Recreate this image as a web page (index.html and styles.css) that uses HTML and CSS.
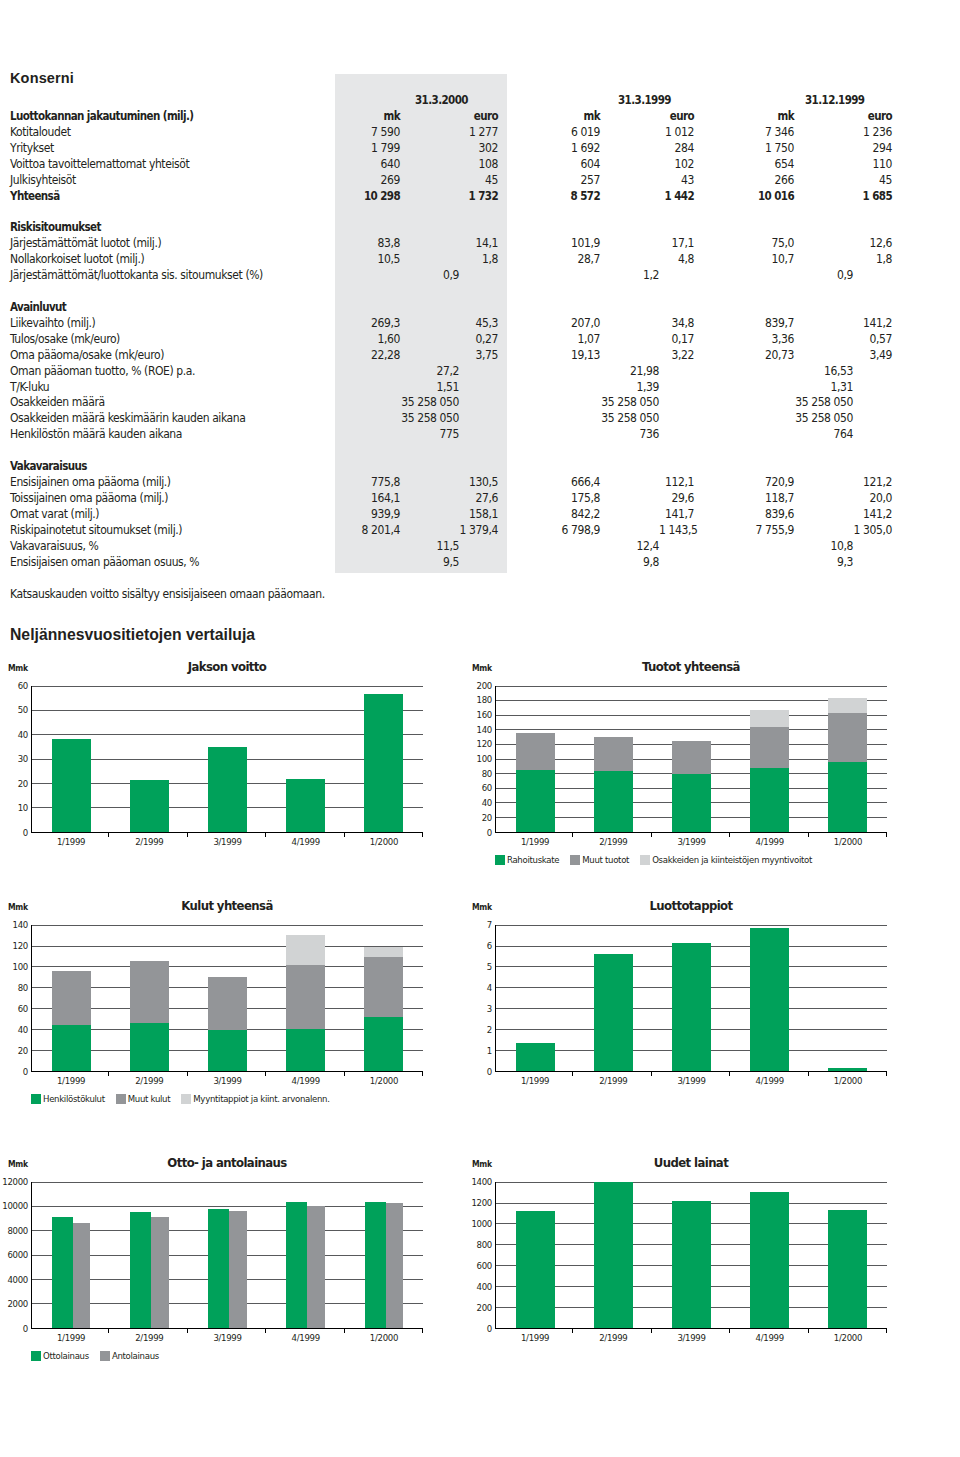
FILE: index.html
```html
<!DOCTYPE html>
<html lang="fi">
<head>
<meta charset="utf-8">
<title>Konserni</title>
<link rel="stylesheet" href="styles.css">
</head>
<body>
<div class="page">
  <section class="konserni">
    <h1 class="h-main">Konserni</h1>
    <div class="row"><span class="date d1">31.3.2000</span><span class="date d2">31.3.1999</span><span class="date d3">31.12.1999</span></div>
    <div class="row b"><span class="lbl">Luottokannan jakautuminen (milj.)</span><span class="v a1">mk</span><span class="v e1">euro</span><span class="v a2">mk</span><span class="v e2">euro</span><span class="v a3">mk</span><span class="v e3">euro</span></div>
    <div class="row"><span class="lbl">Kotitaloudet</span><span class="v a1">7 590</span><span class="v e1">1 277</span><span class="v a2">6 019</span><span class="v e2">1 012</span><span class="v a3">7 346</span><span class="v e3">1 236</span></div>
    <div class="row"><span class="lbl">Yritykset</span><span class="v a1">1 799</span><span class="v e1">302</span><span class="v a2">1 692</span><span class="v e2">284</span><span class="v a3">1 750</span><span class="v e3">294</span></div>
    <div class="row"><span class="lbl">Voittoa tavoittelemattomat yhteisöt</span><span class="v a1">640</span><span class="v e1">108</span><span class="v a2">604</span><span class="v e2">102</span><span class="v a3">654</span><span class="v e3">110</span></div>
    <div class="row"><span class="lbl">Julkisyhteisöt</span><span class="v a1">269</span><span class="v e1">45</span><span class="v a2">257</span><span class="v e2">43</span><span class="v a3">266</span><span class="v e3">45</span></div>
    <div class="row b"><span class="lbl">Yhteensä</span><span class="v a1">10 298</span><span class="v e1">1 732</span><span class="v a2">8 572</span><span class="v e2">1 442</span><span class="v a3">10 016</span><span class="v e3">1 685</span></div>
    <div class="row blank"></div>
    <div class="row b"><span class="lbl">Riskisitoumukset</span></div>
    <div class="row"><span class="lbl">Järjestämättömät luotot (milj.)</span><span class="v a1">83,8</span><span class="v e1">14,1</span><span class="v a2">101,9</span><span class="v e2">17,1</span><span class="v a3">75,0</span><span class="v e3">12,6</span></div>
    <div class="row"><span class="lbl">Nollakorkoiset luotot (milj.)</span><span class="v a1">10,5</span><span class="v e1">1,8</span><span class="v a2">28,7</span><span class="v e2">4,8</span><span class="v a3">10,7</span><span class="v e3">1,8</span></div>
    <div class="row"><span class="lbl">Järjestämättömät/luottokanta sis. sitoumukset (%)</span><span class="v m1">0,9</span><span class="v m2">1,2</span><span class="v m3">0,9</span></div>
    <div class="row blank"></div>
    <div class="row b"><span class="lbl">Avainluvut</span></div>
    <div class="row"><span class="lbl">Liikevaihto (milj.)</span><span class="v a1">269,3</span><span class="v e1">45,3</span><span class="v a2">207,0</span><span class="v e2">34,8</span><span class="v a3">839,7</span><span class="v e3">141,2</span></div>
    <div class="row"><span class="lbl">Tulos/osake (mk/euro)</span><span class="v a1">1,60</span><span class="v e1">0,27</span><span class="v a2">1,07</span><span class="v e2">0,17</span><span class="v a3">3,36</span><span class="v e3">0,57</span></div>
    <div class="row"><span class="lbl">Oma pääoma/osake (mk/euro)</span><span class="v a1">22,28</span><span class="v e1">3,75</span><span class="v a2">19,13</span><span class="v e2">3,22</span><span class="v a3">20,73</span><span class="v e3">3,49</span></div>
    <div class="row"><span class="lbl">Oman pääoman tuotto, % (ROE) p.a.</span><span class="v m1">27,2</span><span class="v m2">21,98</span><span class="v m3">16,53</span></div>
    <div class="row"><span class="lbl">T/K-luku</span><span class="v m1">1,51</span><span class="v m2">1,39</span><span class="v m3">1,31</span></div>
    <div class="row"><span class="lbl">Osakkeiden määrä</span><span class="v m1">35 258 050</span><span class="v m2">35 258 050</span><span class="v m3">35 258 050</span></div>
    <div class="row"><span class="lbl">Osakkeiden määrä keskimäärin kauden aikana</span><span class="v m1">35 258 050</span><span class="v m2">35 258 050</span><span class="v m3">35 258 050</span></div>
    <div class="row"><span class="lbl">Henkilöstön määrä kauden aikana</span><span class="v m1">775</span><span class="v m2">736</span><span class="v m3">764</span></div>
    <div class="row blank"></div>
    <div class="row b"><span class="lbl">Vakavaraisuus</span></div>
    <div class="row"><span class="lbl">Ensisijainen oma pääoma (milj.)</span><span class="v a1">775,8</span><span class="v e1">130,5</span><span class="v a2">666,4</span><span class="v e2">112,1</span><span class="v a3">720,9</span><span class="v e3">121,2</span></div>
    <div class="row"><span class="lbl">Toissijainen oma pääoma (milj.)</span><span class="v a1">164,1</span><span class="v e1">27,6</span><span class="v a2">175,8</span><span class="v e2">29,6</span><span class="v a3">118,7</span><span class="v e3">20,0</span></div>
    <div class="row"><span class="lbl">Omat varat (milj.)</span><span class="v a1">939,9</span><span class="v e1">158,1</span><span class="v a2">842,2</span><span class="v e2">141,7</span><span class="v a3">839,6</span><span class="v e3">141,2</span></div>
    <div class="row"><span class="lbl">Riskipainotetut sitoumukset (milj.)</span><span class="v a1">8 201,4</span><span class="v e1">1 379,4</span><span class="v a2">6 798,9</span><span class="v e2">1 143,5</span><span class="v a3">7 755,9</span><span class="v e3">1 305,0</span></div>
    <div class="row"><span class="lbl">Vakavaraisuus, %</span><span class="v m1">11,5</span><span class="v m2">12,4</span><span class="v m3">10,8</span></div>
    <div class="row"><span class="lbl">Ensisijaisen oman pääoman osuus, %</span><span class="v m1">9,5</span><span class="v m2">9,8</span><span class="v m3">9,3</span></div>
  </section>

  <p class="note">Katsauskauden voitto sisältyy ensisijaiseen omaan pääomaan.</p>

  <h2 class="h-main h-sec">Neljännesvuositietojen vertailuja</h2>

  <div class="chart-row r1">
    <div class="chart">
      <div class="mmk">Mmk</div><div class="ctitle">Jakson voitto</div>
      <div class="yaxis"><span>60</span><span>50</span><span>40</span><span>30</span><span>20</span><span>10</span><span>0</span></div>
      <div class="plot">
        <div class="grid"><i></i><i></i><i></i><i></i><i></i><i></i></div>
        <div class="bars">
          <div class="cat"><div class="bar g" style="height:63.4%"></div></div>
          <div class="cat"><div class="bar g" style="height:35.7%"></div></div>
          <div class="cat"><div class="bar g" style="height:58%"></div></div>
          <div class="cat"><div class="bar g" style="height:36.2%"></div></div>
          <div class="cat"><div class="bar g" style="height:94%"></div></div>
        </div>
      </div>
      <div class="ticks"><i></i><i></i><i></i><i></i><i></i></div>
      <div class="xlabels"><span>1/1999</span><span>2/1999</span><span>3/1999</span><span>4/1999</span><span>1/2000</span></div>
    </div>
    <div class="chart">
      <div class="mmk">Mmk</div><div class="ctitle">Tuotot yhteensä</div>
      <div class="yaxis"><span>200</span><span>180</span><span>160</span><span>140</span><span>120</span><span>100</span><span>80</span><span>60</span><span>40</span><span>20</span><span>0</span></div>
      <div class="plot">
        <div class="grid"><i></i><i></i><i></i><i></i><i></i><i></i><i></i><i></i><i></i><i></i></div>
        <div class="bars">
          <div class="cat"><div class="stack"><div class="gr" style="height:25.3%"></div><div class="g" style="height:42%"></div></div></div>
          <div class="cat"><div class="stack"><div class="gr" style="height:23.4%"></div><div class="g" style="height:41.6%"></div></div></div>
          <div class="cat"><div class="stack"><div class="gr" style="height:22.1%"></div><div class="g" style="height:39.8%"></div></div></div>
          <div class="cat"><div class="stack"><div class="lt" style="height:11.6%"></div><div class="gr" style="height:27.7%"></div><div class="g" style="height:43.9%"></div></div></div>
          <div class="cat"><div class="stack"><div class="lt" style="height:10.3%"></div><div class="gr" style="height:33.9%"></div><div class="g" style="height:47.5%"></div></div></div>
        </div>
      </div>
      <div class="ticks"><i></i><i></i><i></i><i></i><i></i></div>
      <div class="xlabels"><span>1/1999</span><span>2/1999</span><span>3/1999</span><span>4/1999</span><span>1/2000</span></div>
      <div class="legend">
        <span class="key"><span class="sw g"></span>Rahoituskate</span>
        <span class="key"><span class="sw gr"></span>Muut tuotot</span>
        <span class="key"><span class="sw lt"></span>Osakkeiden ja kiinteistöjen myyntivoitot</span>
      </div>
    </div>
  </div>

  <div class="chart-row r2">
    <div class="chart">
      <div class="mmk">Mmk</div><div class="ctitle">Kulut yhteensä</div>
      <div class="yaxis"><span>140</span><span>120</span><span>100</span><span>80</span><span>60</span><span>40</span><span>20</span><span>0</span></div>
      <div class="plot">
        <div class="grid"><i></i><i></i><i></i><i></i><i></i><i></i><i></i></div>
        <div class="bars">
          <div class="cat"><div class="stack"><div class="gr" style="height:37%"></div><div class="g" style="height:31.3%"></div></div></div>
          <div class="cat"><div class="stack"><div class="gr" style="height:42.4%"></div><div class="g" style="height:32.9%"></div></div></div>
          <div class="cat"><div class="stack"><div class="gr" style="height:35.8%"></div><div class="g" style="height:28.1%"></div></div></div>
          <div class="cat"><div class="stack"><div class="lt" style="height:20.4%"></div><div class="gr" style="height:44.2%"></div><div class="g" style="height:28.4%"></div></div></div>
          <div class="cat"><div class="stack"><div class="lt" style="height:6.8%"></div><div class="gr" style="height:41.3%"></div><div class="g" style="height:36.7%"></div></div></div>
        </div>
      </div>
      <div class="ticks"><i></i><i></i><i></i><i></i><i></i></div>
      <div class="xlabels"><span>1/1999</span><span>2/1999</span><span>3/1999</span><span>4/1999</span><span>1/2000</span></div>
      <div class="legend">
        <span class="key"><span class="sw g"></span>Henkilöstökulut</span>
        <span class="key"><span class="sw gr"></span>Muut kulut</span>
        <span class="key"><span class="sw lt"></span>Myyntitappiot ja kiint. arvonalenn.</span>
      </div>
    </div>
    <div class="chart">
      <div class="mmk">Mmk</div><div class="ctitle">Luottotappiot</div>
      <div class="yaxis"><span>7</span><span>6</span><span>5</span><span>4</span><span>3</span><span>2</span><span>1</span><span>0</span></div>
      <div class="plot">
        <div class="grid"><i></i><i></i><i></i><i></i><i></i><i></i><i></i></div>
        <div class="bars">
          <div class="cat"><div class="bar g" style="height:18.8%"></div></div>
          <div class="cat"><div class="bar g" style="height:80%"></div></div>
          <div class="cat"><div class="bar g" style="height:87.6%"></div></div>
          <div class="cat"><div class="bar g" style="height:97.6%"></div></div>
          <div class="cat"><div class="bar g" style="height:1.6%"></div></div>
        </div>
      </div>
      <div class="ticks"><i></i><i></i><i></i><i></i><i></i></div>
      <div class="xlabels"><span>1/1999</span><span>2/1999</span><span>3/1999</span><span>4/1999</span><span>1/2000</span></div>
    </div>
  </div>

  <div class="chart-row r3">
    <div class="chart">
      <div class="mmk">Mmk</div><div class="ctitle">Otto- ja antolainaus</div>
      <div class="yaxis"><span>12000</span><span>10000</span><span>8000</span><span>6000</span><span>4000</span><span>2000</span><span>0</span></div>
      <div class="plot">
        <div class="grid"><i></i><i></i><i></i><i></i><i></i><i></i></div>
        <div class="bars">
          <div class="cat"><div class="bar g pg" style="height:76.1%"></div><div class="bar gr pr" style="height:72%"></div></div>
          <div class="cat"><div class="bar g pg" style="height:79.5%"></div><div class="bar gr pr" style="height:75.5%"></div></div>
          <div class="cat"><div class="bar g pg" style="height:81.6%"></div><div class="bar gr pr" style="height:80%"></div></div>
          <div class="cat"><div class="bar g pg" style="height:85.9%"></div><div class="bar gr pr" style="height:83.4%"></div></div>
          <div class="cat"><div class="bar g pg" style="height:86.2%"></div><div class="bar gr pr" style="height:85.7%"></div></div>
        </div>
      </div>
      <div class="ticks"><i></i><i></i><i></i><i></i><i></i></div>
      <div class="xlabels"><span>1/1999</span><span>2/1999</span><span>3/1999</span><span>4/1999</span><span>1/2000</span></div>
      <div class="legend">
        <span class="key"><span class="sw g"></span>Ottolainaus</span>
        <span class="key"><span class="sw gr"></span>Antolainaus</span>
      </div>
    </div>
    <div class="chart">
      <div class="mmk">Mmk</div><div class="ctitle">Uudet lainat</div>
      <div class="yaxis"><span>1400</span><span>1200</span><span>1000</span><span>800</span><span>600</span><span>400</span><span>200</span><span>0</span></div>
      <div class="plot">
        <div class="grid"><i></i><i></i><i></i><i></i><i></i><i></i><i></i></div>
        <div class="bars">
          <div class="cat"><div class="bar g" style="height:79.6%"></div></div>
          <div class="cat"><div class="bar g" style="height:100%"></div></div>
          <div class="cat"><div class="bar g" style="height:86.6%"></div></div>
          <div class="cat"><div class="bar g" style="height:93%"></div></div>
          <div class="cat"><div class="bar g" style="height:80.7%"></div></div>
        </div>
      </div>
      <div class="ticks"><i></i><i></i><i></i><i></i><i></i></div>
      <div class="xlabels"><span>1/1999</span><span>2/1999</span><span>3/1999</span><span>4/1999</span><span>1/2000</span></div>
    </div>
  </div>
</div>
</body>
</html>
```

FILE: styles.css
```css
html, body {
  margin: 0;
  padding: 0;
  background: #ffffff;
}

body {
  color: #231f20;
  font-family: "Liberation Sans Narrow", "DejaVu Sans Condensed", "Roboto", sans-serif;
}

.page {
  width: 960px;
  padding: 74px 0 40px;
}

/* ---------- table ---------- */
.konserni {
  padding: 0 0 2.4px 10px;
  background: linear-gradient(to right, transparent 335px, #e6e7e8 335px, #e6e7e8 507px, transparent 507px);
  font-size: 12px;
  letter-spacing: -0.4px;
}

.h-main {
  margin: 0 0 11px;
  font-family: "Liberation Sans", Arial, sans-serif;
  font-weight: bold;
  font-size: 14.5px;
  line-height: 8px;
  letter-spacing: 0.15px;
}

.row {
  display: grid;
  grid-template-columns: 325px 65px 59px 39px 9px 93px 59px 35px 100px 59px 39px;
  line-height: 15.92px;
  white-space: nowrap;
}

.row > span { grid-row: 1; }

.blank { height: 15.92px; }

.b {
  font-weight: bold;
  font-size: 11.5px;
  letter-spacing: -0.6px;
}

.lbl { grid-column: 1; }
.v { text-align: right; }
.a1 { grid-column: 2; }
.m1 { grid-column: 3; }
.e1 { grid-column: 4; }
.a2 { grid-column: 6; }
.m2 { grid-column: 7; }
.e2 { grid-column: 8; }
.a3 { grid-column: 9; }
.m3 { grid-column: 10; }
.e3 { grid-column: 11; }

.date {
  font-weight: bold;
  font-size: 11.5px;
  letter-spacing: -0.6px;
  text-align: left;
}
.d1 { grid-column: 3 / 5; padding-left: 15px; }
.d2 { grid-column: 7 / 9; padding-left: 18px; }
.d3 { grid-column: 10 / 12; padding-left: 11px; }

.note {
  margin: 13.3px 0 0 10px;
  font-size: 12px;
  letter-spacing: -0.4px;
  line-height: 16px;
}

.h-sec {
  margin: 22.7px 0 0 10px;
  font-size: 15.75px;
  line-height: 20px;
  letter-spacing: 0;
}

/* ---------- charts ---------- */
.chart-row {
  display: grid;
  grid-template-columns: 464px 430px;
  align-items: start;
}
.r1 { margin-top: 12.7px; }
.r2 { margin-top: 31px; }
.r3 { margin-top: 49px; }

.chart {
  display: grid;
  grid-template-columns: 28px 392px;
  column-gap: 3px;
  font-size: 9.5px;
  letter-spacing: -0.3px;
  color: #231f20;
  white-space: nowrap;
}

.mmk {
  grid-column: 1;
  align-self: baseline;
  text-align: right;
  font-weight: bold;
  font-size: 8.5px;
  letter-spacing: -0.2px;
}

.ctitle {
  grid-column: 2;
  align-self: baseline;
  text-align: center;
  font-weight: bold;
  font-size: 13px;
  letter-spacing: -0.6px;
  line-height: 18px;
  margin-bottom: 10px;
}

.yaxis {
  grid-column: 1;
  display: flex;
  flex-direction: column;
  justify-content: space-between;
  align-items: flex-end;
  margin: -6px 0;
  line-height: 12px;
}

.plot {
  grid-column: 2;
  display: grid;
  grid-template: 1fr / 1fr;
  height: 147px;
  box-sizing: border-box;
  border-left: 1px solid #000;
  border-bottom: 1px solid #000;
}

.grid, .bars { grid-area: 1 / 1; }

.grid {
  display: flex;
  flex-direction: column;
}
.grid i {
  flex: 1;
  border-top: 1px solid #58595b;
}

.bars { display: flex; }

.cat {
  flex: 1;
  display: flex;
  justify-content: center;
  align-items: flex-end;
}

.bar { width: 50%; }
.pg { width: 27%; }
.pr { width: 22.5%; }

.stack {
  width: 50%;
  height: 100%;
  display: flex;
  flex-direction: column;
  justify-content: flex-end;
}

.g { background: #00a15a; }
.gr { background: #939598; }
.lt { background: #d1d3d4; }

.ticks {
  grid-column: 2;
  display: flex;
  height: 4px;
}
.ticks i {
  flex: 1;
  border-right: 1px solid #000;
}

.xlabels {
  grid-column: 2;
  display: flex;
  margin-top: -1px;
  padding-left: 1px;
  line-height: 12px;
}
.xlabels span {
  flex: 1;
  text-align: center;
}

.legend {
  grid-column: 2;
  display: flex;
  gap: 11px;
  margin-top: 6px;
  line-height: 12px;
}

.key {
  display: flex;
  align-items: center;
  gap: 2px;
}

.sw {
  width: 10px;
  height: 10px;
}
```
